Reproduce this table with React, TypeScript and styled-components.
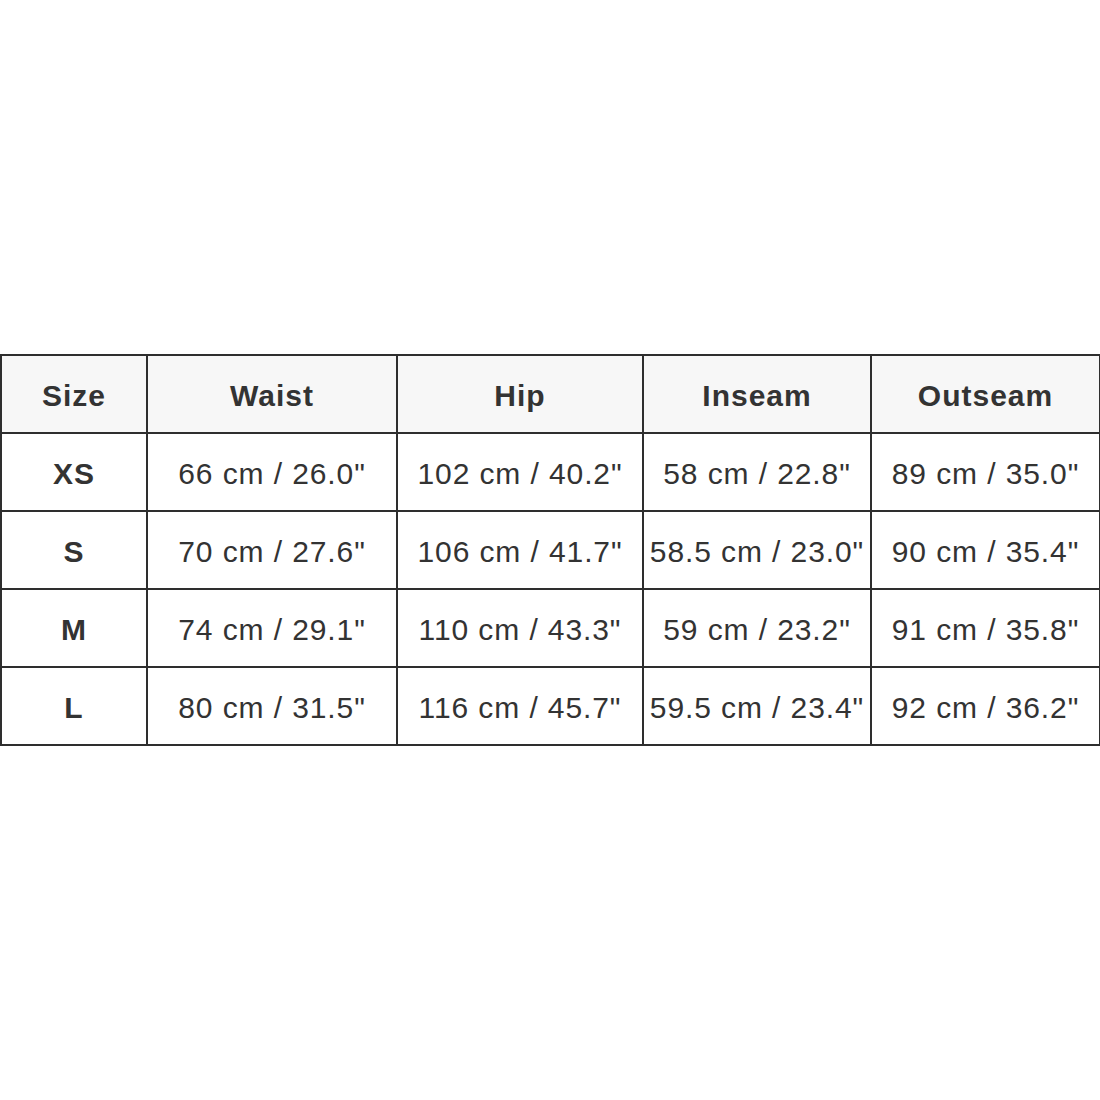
import React from 'react';
import styled, {createGlobalStyle} from 'styled-components';

const GlobalStyle = createGlobalStyle`
  html, body {
    margin: 0;
    padding: 0;
    background: #fff;
  }
  body {
    font-family: "Liberation Sans", Arial, sans-serif;
  }
`;

const Page = styled.div`
  width: 1100px;
  height: 1100px;
  display: flex;
  flex-direction: column;
  justify-content: flex-start;
  padding-top: 354px;
  box-sizing: border-box;
`;

const Table = styled.table`
  width: 1099px;
  border-collapse: collapse;
  table-layout: fixed;
  color: #333;
`;

const HeadCell = styled.th`
  height: 73px;
  padding: 3px 0 0;
  background: #f7f7f7;
  border: 2px solid #2e2e2e;
  font-size: 30px;
  font-weight: bold;
  letter-spacing: 1px;
  text-align: center;
  vertical-align: middle;
`;

const Cell = styled.td<{ $bold?: boolean }>`
  height: 73px;
  padding: 3px 0 0;
  background: #fff;
  border: 2px solid #2e2e2e;
  font-size: 30px;
  font-weight: ${p => (p.$bold ? 'bold' : 'normal')};
  letter-spacing: ${p => (p.$bold ? '1px' : '0.9px')};
  text-align: center;
  vertical-align: middle;
  white-space: nowrap;
`;

const headers = ['Size', 'Waist', 'Hip', 'Inseam', 'Outseam'];
const widths = [146, 250, 246, 228, 229];

const rows = [
    ['XS', '66 cm / 26.0"', '102 cm / 40.2"', '58 cm / 22.8"', '89 cm / 35.0"'],
    ['S', '70 cm / 27.6"', '106 cm / 41.7"', '58.5 cm / 23.0"', '90 cm / 35.4"'],
    ['M', '74 cm / 29.1"', '110 cm / 43.3"', '59 cm / 23.2"', '91 cm / 35.8"'],
    ['L', '80 cm / 31.5"', '116 cm / 45.7"', '59.5 cm / 23.4"', '92 cm / 36.2"'],
];

function App() {
    return (
        <Page>
            <GlobalStyle/>
            <Table>
                <colgroup>
                    {widths.map((w, i) => <col key={i} style={{width: w}}/>)}
                </colgroup>
                <thead>
                <tr>
                    {headers.map(h => <HeadCell key={h}>{h}</HeadCell>)}
                </tr>
                </thead>
                <tbody>
                {rows.map(r =>
                    <tr key={r[0]}>
                        {r.map((c, i) => <Cell key={i} $bold={i === 0}>{c}</Cell>)}
                    </tr>
                )}
                </tbody>
            </Table>
        </Page>
    );
}

export default App;
